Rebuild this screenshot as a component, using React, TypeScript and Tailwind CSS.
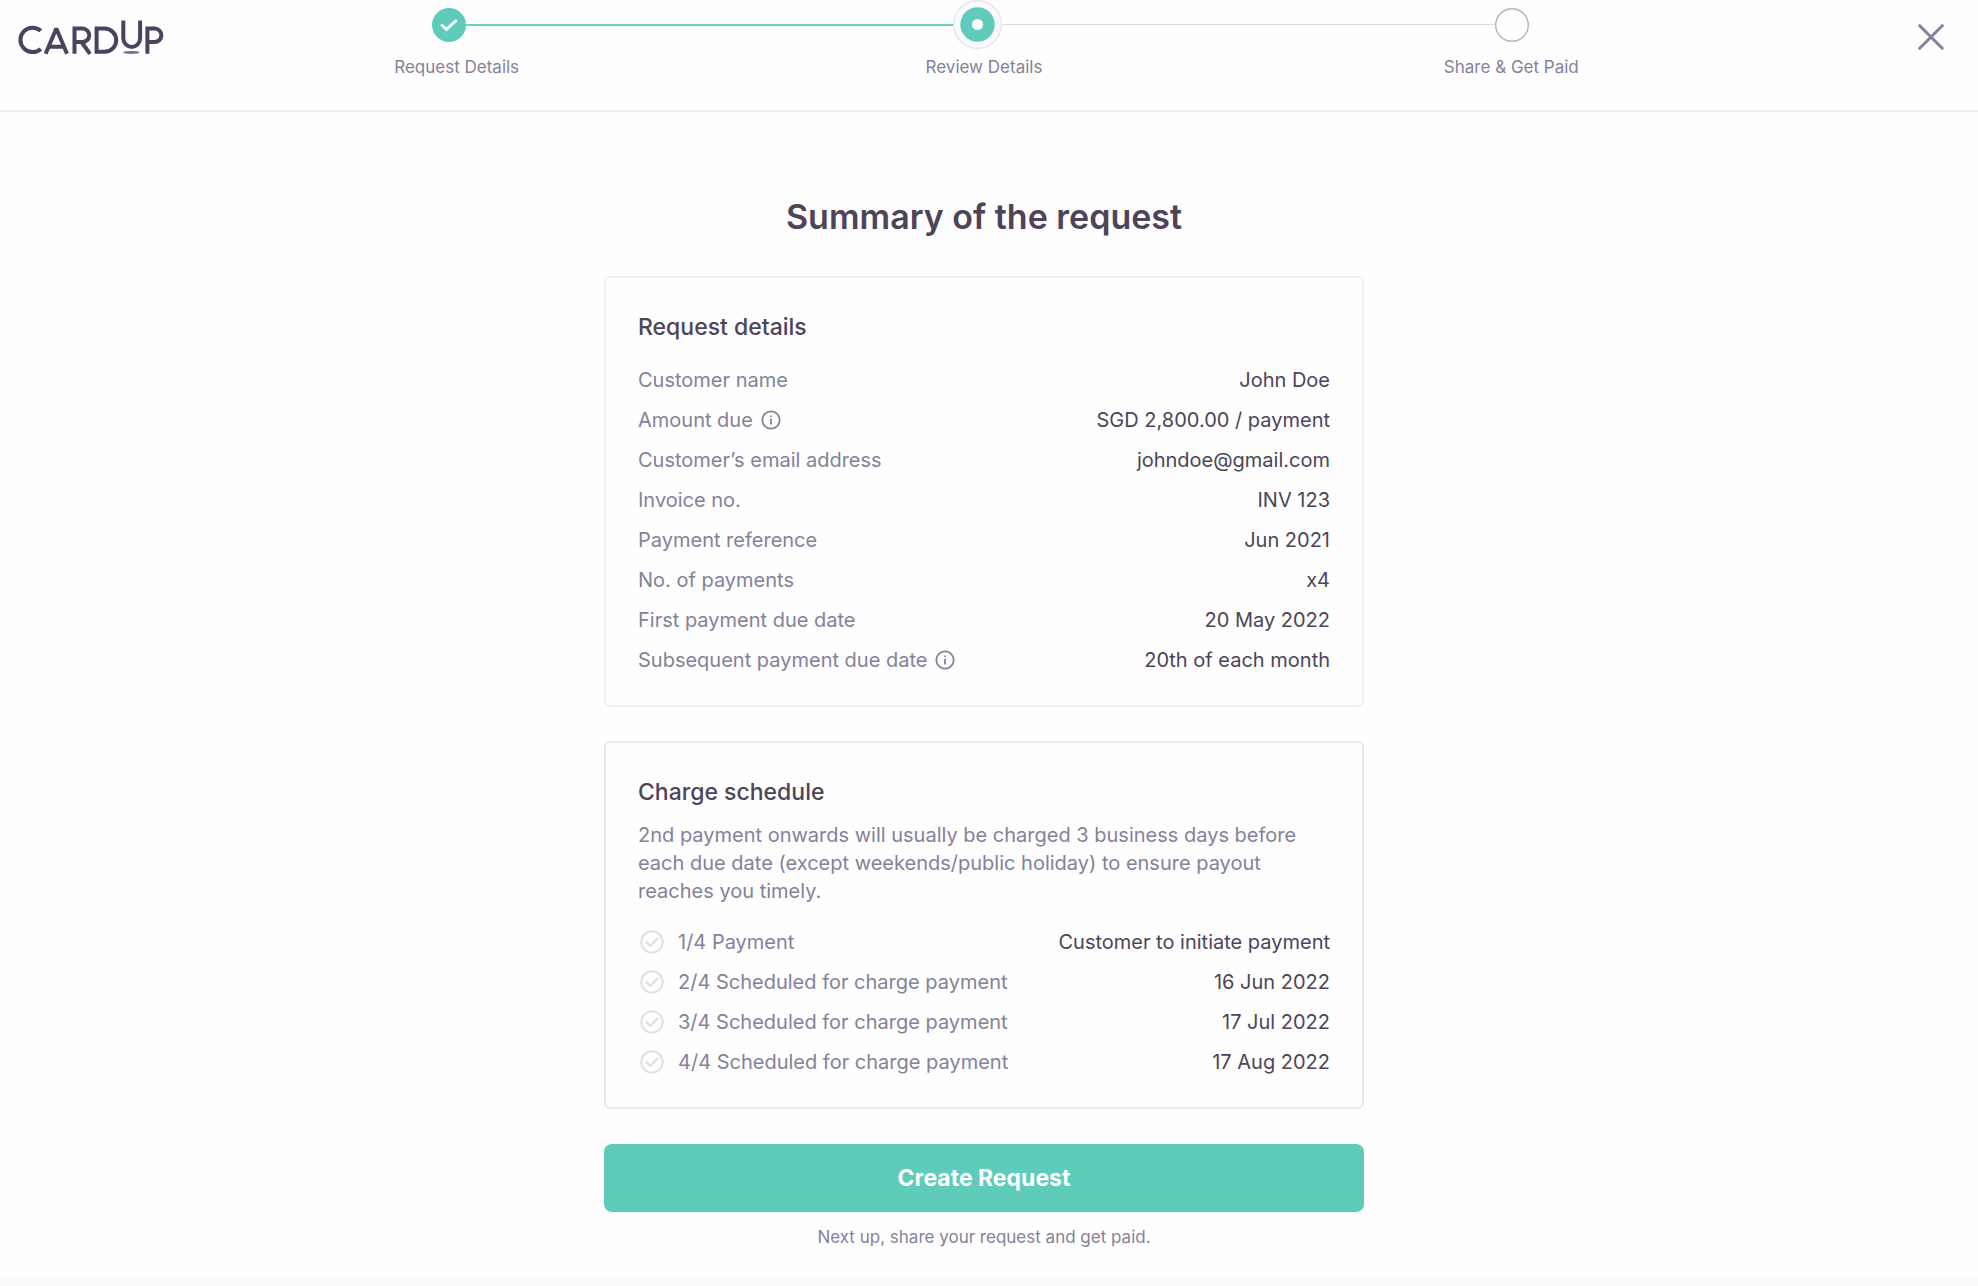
function Logo() {
  return (
    <svg viewBox="0 0 146 38" className="h-[38px] w-[146px]" fill="none" stroke="#4c4260" strokeWidth="4" role="img" aria-label="CardUp">
      <path d="M22.800 12.800A12.200 12.200 0 1 0 22.800 30.900" />
      <path d="M27.600 35.800 38.300 10.500 49 35.800M31.500 28.700H45.500" strokeLinejoin="bevel" />
      <path d="M56.500 35.800V10.600H64.600a6.700 6.700 0 0 1 0 13.400H56.500M63.500 24 72 35.800" />
      <path d="M78.600 33.800V10.600H86.600a11.600 11.600 0 0 1 0 23.200Z" />
      <path d="M105.300 2.500V20.500a8.400 8.400 0 0 0 16.800 0V2.500" />
      <path d="M129.400 35.800V10.600H136.700a6.700 6.700 0 0 1 0 13.400H129.400" />
      <ellipse cx="113.4" cy="34.4" rx="8.2" ry="1.5" fill="#7c6a9c" stroke="none" />
    </svg>
  );
}

function InfoIcon() {
  return (
    <svg viewBox="0 0 20 20" className="size-5" fill="none" stroke="#83829a" strokeWidth="1.8" aria-hidden="true">
      <circle cx="10" cy="10" r="8.7" />
      <path d="M10 8.800v5.700M10 5.400v1.700" />
    </svg>
  );
}

function TickIcon() {
  return (
    <svg viewBox="0 0 28 28" className="size-7" fill="none" stroke="#e2e2e2" strokeWidth="2.1" strokeLinecap="round" strokeLinejoin="round" aria-hidden="true">
      <circle cx="14" cy="14" r="10.7" />
      <path d="m8.500 14.200 3.700 3.700 7.300-7.200" strokeWidth="2.4" />
    </svg>
  );
}

function DoneMarker() {
  return (
    <svg viewBox="0 0 34 34" className="size-[34px]" fill="none" aria-hidden="true">
      <circle cx="17" cy="17" r="17" fill="#5ecbbb" />
      <path d="m10 17.300 4.300 4.300 9.500-8.800" stroke="#fff" strokeWidth="2.8" strokeLinecap="round" strokeLinejoin="round" />
    </svg>
  );
}

function CurrentMarker() {
  return (
    <svg viewBox="0 0 49 49" className="size-[49px]" aria-hidden="true">
      <circle cx="24.5" cy="24.5" r="23.9" fill="#f9f9fe" stroke="#e4e4e6" strokeWidth="1.2" />
      <circle cx="24.5" cy="24.5" r="17.2" fill="#5ecbbb" />
      <circle cx="24.5" cy="24.5" r="5.6" fill="#fff" />
    </svg>
  );
}

function UpcomingMarker() {
  return (
    <svg viewBox="0 0 34 34" className="size-[34px]" aria-hidden="true">
      <circle cx="17" cy="17" r="16.3" fill="#fefefe" stroke="#b3b2bf" strokeWidth="1.4" />
    </svg>
  );
}

const steps = ["Request Details", "Review Details", "Share & Get Paid"];

const details = [
  { label: "Customer name", value: "John Doe" },
  { label: "Amount due", value: "SGD 2,800.00 / payment", info: true },
  { label: "Customer’s email address", value: "johndoe@gmail.com" },
  { label: "Invoice no.", value: "INV 123" },
  { label: "Payment reference", value: "Jun 2021" },
  { label: "No. of payments", value: "x4" },
  { label: "First payment due date", value: "20 May 2022" },
  { label: "Subsequent payment due date", value: "20th of each month", info: true },
];

const schedule = [
  { label: "1/4 Payment", value: "Customer to initiate payment" },
  { label: "2/4 Scheduled for charge payment", value: "16 Jun 2022" },
  { label: "3/4 Scheduled for charge payment", value: "17 Jul 2022" },
  { label: "4/4 Scheduled for charge payment", value: "17 Aug 2022" },
];

export default function App() {
  return (
    <div className="flex min-h-screen flex-col bg-[#fefefe] font-['Inter',sans-serif] text-[#4d4459]">
      <header className="flex items-start border-b-2 border-[#f0f0f0] pb-[31px]">
        <a href="#home" className="mt-[18px] ml-[18px]">
          <Logo />
        </a>
        <nav aria-label="Progress" className="mr-[143px] ml-[29px] flex-1">
          <div className="flex items-center pr-[246px] pl-[239px]">
            <DoneMarker />
            <span className="h-0.5 flex-[487] bg-[#6fd0c2]" />
            <CurrentMarker />
            <span className="h-px flex-[493] bg-[#dcdcdf]" />
            <UpcomingMarker />
          </div>
          <ol className="mt-1.5 grid grid-cols-3 text-center text-[17px] leading-6 text-[#83829a]">
            {steps.map((s) => (
              <li key={s}>{s}</li>
            ))}
          </ol>
        </nav>
        <button type="button" aria-label="Close" className="mt-6 mr-[34px]">
          <svg viewBox="0 0 26 26" className="size-[26px]" fill="none" stroke="#83829a" strokeWidth="3" strokeLinecap="round" aria-hidden="true">
            <path d="M1.700 1.700 24.300 24.300M24.300 1.700 1.700 24.300" />
          </svg>
        </button>
      </header>
      <main className="flex flex-col items-center pr-2.5 pb-6">
        <div className="flex w-full max-w-[760px] flex-col">
          <h1 className="mt-[81px] text-center text-[34px] leading-[48px] font-semibold">Summary of the request</h1>
          <section className="mt-[35px] rounded-md border-2 border-[#f0f0f0] px-8 pt-8 pb-[25px]">
            <h2 className="text-[23px] leading-[34px] font-medium">Request details</h2>
            <dl className="mt-4 text-xl leading-10">
              {details.map((d) => (
                <div key={d.label} className="flex justify-between">
                  <dt className="flex items-center gap-2 text-[#83829a]">
                    {d.label}
                    {d.info && <InfoIcon />}
                  </dt>
                  <dd>{d.value}</dd>
                </div>
              ))}
            </dl>
          </section>
          <section className="mt-[34px] rounded-md border-2 border-[#e9e9e9] px-8 pt-8 pb-[25px]">
            <h2 className="text-[23px] leading-[34px] font-medium">Charge schedule</h2>
            <p className="mt-3 text-xl leading-7 text-[#83829a]">
              2nd payment onwards will usually be charged 3 business days before each due date (except weekends/public holiday) to ensure payout reaches you timely.
            </p>
            <dl className="mt-[17px] text-xl leading-10">
              {schedule.map((d) => (
                <div key={d.label} className="flex justify-between">
                  <dt className="flex items-center gap-3 text-[#83829a]">
                    <TickIcon />
                    {d.label}
                  </dt>
                  <dd>{d.value}</dd>
                </div>
              ))}
            </dl>
          </section>
          <button type="button" className="mt-[35px] h-17 rounded-lg bg-[#5ecbbb] text-[23px] font-bold text-white">
            Create Request
          </button>
          <p className="mt-[11px] text-center text-[17px] leading-7 text-[#83829a]">Next up, share your request and get paid.</p>
        </div>
      </main>
      <div className="flex-1 bg-[#fcfcfc]" />
    </div>
  );
}
